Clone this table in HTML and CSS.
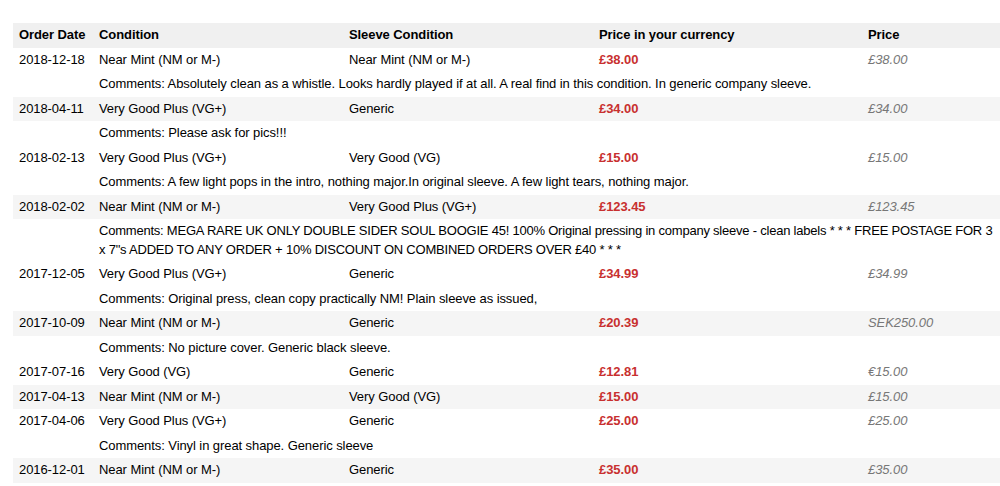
FILE: index.html
```html
<!DOCTYPE html>
<html>
<head>
<meta charset="utf-8">
<link rel="stylesheet" href="styles.css">
</head>
<body>
<table class="orders">
  <colgroup>
    <col class="c-date"><col class="c-cond"><col class="c-sleeve"><col class="c-cur"><col class="c-price">
  </colgroup>
  <thead>
    <tr><th>Order Date</th><th>Condition</th><th>Sleeve Condition</th><th>Price in your currency</th><th>Price</th></tr>
  </thead>
  <tbody>
    <tr class="row"><td>2018-12-18</td><td>Near Mint (NM or M-)</td><td>Near Mint (NM or M-)</td><td class="cur">£38.00</td><td class="orig">£38.00</td></tr>
    <tr class="comment"><td></td><td colspan="4">Comments: Absolutely clean as a whistle. Looks hardly played if at all. A real find in this condition. In generic company sleeve.</td></tr>
    <tr class="row alt"><td>2018-04-11</td><td>Very Good Plus (VG+)</td><td>Generic</td><td class="cur">£34.00</td><td class="orig">£34.00</td></tr>
    <tr class="comment"><td></td><td colspan="4">Comments: Please ask for pics!!!</td></tr>
    <tr class="row"><td>2018-02-13</td><td>Very Good Plus (VG+)</td><td>Very Good (VG)</td><td class="cur">£15.00</td><td class="orig">£15.00</td></tr>
    <tr class="comment"><td></td><td colspan="4">Comments: A few light pops in the intro, nothing major.In original sleeve. A few light tears, nothing major.</td></tr>
    <tr class="row alt"><td>2018-02-02</td><td>Near Mint (NM or M-)</td><td>Very Good Plus (VG+)</td><td class="cur">£123.45</td><td class="orig">£123.45</td></tr>
    <tr class="comment caps"><td></td><td colspan="4">Comments: MEGA RARE UK ONLY DOUBLE SIDER SOUL BOOGIE 45! 100% Original pressing in company sleeve - clean labels * * * FREE POSTAGE FOR 3 x 7"s ADDED TO ANY ORDER + 10% DISCOUNT ON COMBINED ORDERS OVER £40 * * *</td></tr>
    <tr class="row"><td>2017-12-05</td><td>Very Good Plus (VG+)</td><td>Generic</td><td class="cur">£34.99</td><td class="orig">£34.99</td></tr>
    <tr class="comment"><td></td><td colspan="4">Comments: Original press, clean copy practically NM! Plain sleeve as issued,</td></tr>
    <tr class="row alt"><td>2017-10-09</td><td>Near Mint (NM or M-)</td><td>Generic</td><td class="cur">£20.39</td><td class="orig">SEK250.00</td></tr>
    <tr class="comment"><td></td><td colspan="4">Comments: No picture cover. Generic black sleeve.</td></tr>
    <tr class="row"><td>2017-07-16</td><td>Very Good (VG)</td><td>Generic</td><td class="cur">£12.81</td><td class="orig">€15.00</td></tr>
    <tr class="row alt"><td>2017-04-13</td><td>Near Mint (NM or M-)</td><td>Very Good (VG)</td><td class="cur">£15.00</td><td class="orig">£15.00</td></tr>
    <tr class="row"><td>2017-04-06</td><td>Very Good Plus (VG+)</td><td>Generic</td><td class="cur">£25.00</td><td class="orig">£25.00</td></tr>
    <tr class="comment"><td></td><td colspan="4">Comments: Vinyl in great shape. Generic sleeve</td></tr>
    <tr class="row alt"><td>2016-12-01</td><td>Near Mint (NM or M-)</td><td>Generic</td><td class="cur">£35.00</td><td class="orig">£35.00</td></tr>
  </tbody>
</table>
</body>
</html>
```

FILE: styles.css
```css
html, body {
  margin: 0;
  padding: 0;
  overflow: hidden;
  background: #fff;
}
body {
  padding: 23px 0 0 13px;
  font-family: "Liberation Sans", Arial, Helvetica, sans-serif;
  font-size: 13px;
  letter-spacing: -0.08px;
  color: #000;
}
.orders {
  border-collapse: collapse;
  width: 987px;
  table-layout: fixed;
}
.c-date { width: 80px; }
.c-cond { width: 250px; }
.c-sleeve { width: 250px; }
.c-cur { width: 269px; }
.c-price { width: 138px; }
.orders th,
.orders td {
  padding: 3px 6px;
  line-height: 18.5px;
  text-align: left;
  vertical-align: top;
  white-space: nowrap;
}
.orders th {
  background: #f0f0f0;
  font-weight: bold;
}
.orders .comment td {
  white-space: normal;
}
.orders .caps td {
  letter-spacing: -0.22px;
}
.orders .alt td {
  background: #f5f5f5;
}
.cur {
  color: #c8302f;
  font-weight: bold;
}
.orig {
  color: #777;
  font-style: italic;
}
```
